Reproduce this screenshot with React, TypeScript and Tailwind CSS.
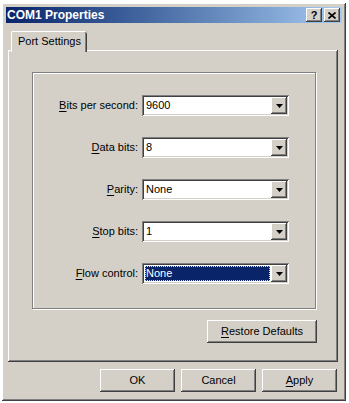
import React from "react";

// Win2000-style "COM1 Properties" dialog
const raised =
  "bg-[#d4d0c8] shadow-[inset_-1px_-1px_#404040,inset_1px_1px_#ffffff,inset_-2px_-2px_#808080,inset_2px_2px_#d4d0c8]";
const sunken =
  "bg-white shadow-[inset_1px_1px_#808080,inset_-1px_-1px_#ffffff,inset_2px_2px_#404040,inset_-2px_-2px_#d4d0c8]";

const Arrow = () => (
  <svg width="7" height="4" viewBox="0 0 7 4">
    <path d="M0 0h7L3.5 4z" fill="#000" />
  </svg>
);

type RowProps = {
  hot: string;
  rest: string;
  value: string;
  selected?: boolean;
};

const Row = ({ hot, rest, value, selected }: RowProps) => (
  <div className="flex h-[21px] items-center">
    <div className="w-[105px] text-right">
      <span className="underline underline-offset-2">{hot}</span>
      {rest}
    </div>
    <div className={`ml-[4px] flex h-[21px] w-[147px] items-center p-[2px] ${sunken}`}>
      <div className="flex h-full flex-1 items-center pl-[1px] pr-[1px]">
        {selected ? (
          <div className="flex h-[15px] w-full items-center border border-dotted border-[#e8e2a8] bg-[#0a246a] text-white">
            {value}
          </div>
        ) : (
          <span className="pl-[1px]">{value}</span>
        )}
      </div>
      <div className={`flex h-[17px] w-[16px] items-center justify-center ${raised}`}>
        <Arrow />
      </div>
    </div>
  </div>
);

const Btn = ({ children, w }: { children: React.ReactNode; w: string }) => (
  <div className={`flex h-[23px] items-center justify-center ${w} ${raised}`}>{children}</div>
);

export default function App() {
  return (
    <div className="h-[403px] w-[349px] overflow-hidden bg-white pl-[2px] pt-[3px] font-['Liberation_Sans',Arial,sans-serif] text-[11px] text-black">
      <div className={`flex h-[398px] w-[344px] flex-col p-[4px] ${raised}`}>
        {/* Title bar */}
        <div className="flex h-[16px] items-center bg-gradient-to-r from-[#0a246a] to-[#a6caf0] pl-[1px] pr-[2px]">
          <span className="flex-1 text-[12px] font-bold leading-none text-white">COM1 Properties</span>
          <div className="flex gap-[2px]">
            <div className={`flex h-[14px] w-[16px] items-center justify-center text-[11px] font-bold leading-none ${raised}`}>
              ?
            </div>
            <div className={`flex h-[14px] w-[16px] items-center justify-center ${raised}`}>
              <svg width="8" height="7" viewBox="0 0 8 7">
                <path d="M0.5 0.5l7 6M7.5 0.5l-7 6" stroke="#000" strokeWidth="1.6" />
              </svg>
            </div>
          </div>
        </div>

        {/* Tab control */}
        <div className="ml-[2px] mt-[8px] flex flex-col">
          <div className="relative z-10 ml-[3px] -mb-[2px] flex h-[21px] w-[76px] items-center rounded-t-[2px] bg-[#d4d0c8] pl-[7px] shadow-[inset_1px_0_#ffffff,inset_0_1px_#ffffff,inset_-1px_0_#404040,inset_-2px_0_#808080]">
            Port Settings
          </div>
          <div className={`flex h-[312px] w-[330px] flex-col pl-[24px] pt-[22px] ${raised}`}>
            {/* Group box */}
            <div className="flex h-[237px] w-[284px] flex-col gap-[21px] border border-[#808080] pt-[22px] shadow-[inset_1px_1px_#ffffff,1px_1px_#ffffff]">
              <Row hot="B" rest="its per second:" value="9600" />
              <Row hot="D" rest="ata bits:" value="8" />
              <Row hot="P" rest="arity:" value="None" />
              <Row hot="S" rest="top bits:" value="1" />
              <Row hot="F" rest="low control:" value="None" selected />
            </div>
            <div className="ml-[175px] mt-[11px]">
              <Btn w="w-[110px]">
                <span>
                  <span className="underline underline-offset-2">R</span>estore Defaults
                </span>
              </Btn>
            </div>
          </div>
        </div>

        {/* Dialog buttons */}
        <div className="ml-[94px] mt-[7px] flex gap-[6px]">
          <Btn w="w-[75px]">OK</Btn>
          <Btn w="w-[75px]">Cancel</Btn>
          <Btn w="w-[75px]">
            <span>
              <span className="underline underline-offset-2">A</span>pply
            </span>
          </Btn>
        </div>
      </div>
    </div>
  );
}
